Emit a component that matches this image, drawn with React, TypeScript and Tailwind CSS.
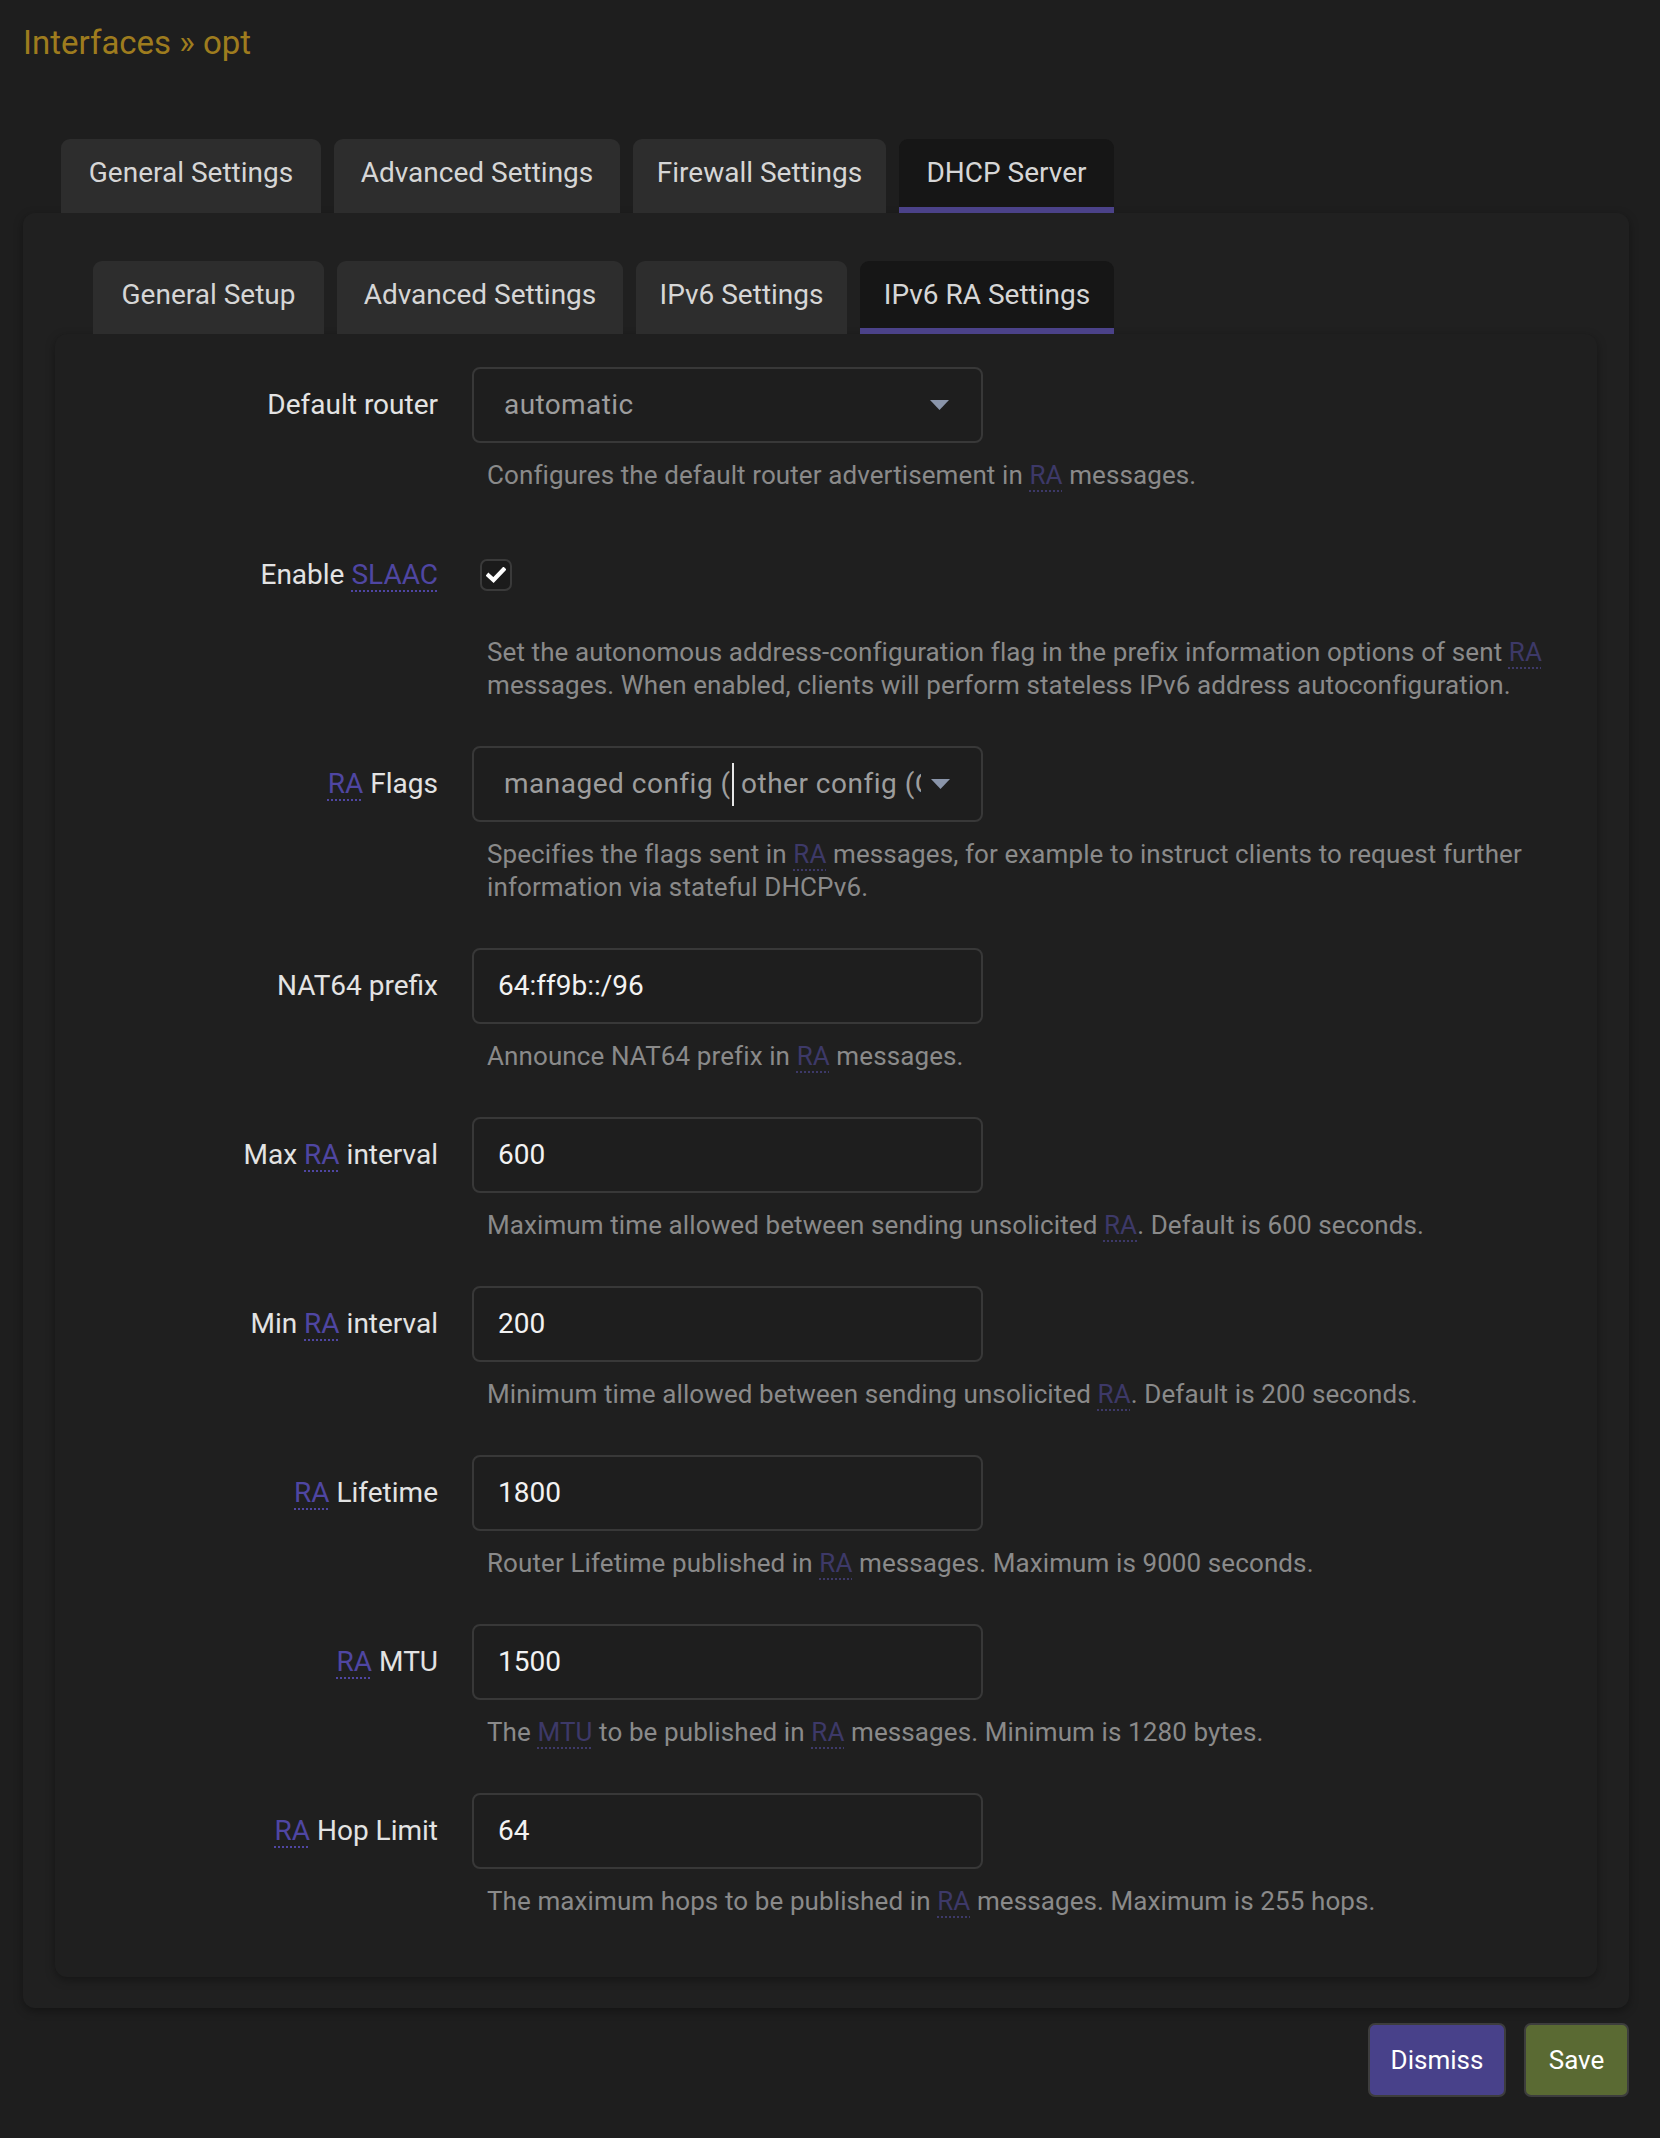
import React from "react";

const Abbr = ({ children, dim }: { children: React.ReactNode; dim?: boolean }) => (
  <abbr
    className={
      dim
        ? "text-[#3d3968] underline decoration-dotted decoration-2 underline-offset-[6px]"
        : "text-[#4f46a2] underline decoration-dotted decoration-2 underline-offset-[6px]"
    }
  >
    {children}
  </abbr>
);

const Arrow = () => (
  <svg width="19" height="10" viewBox="0 0 19 10" className="shrink-0">
    <path d="M0 0 L19 0 L9.5 10 Z" fill="#8a95aa" />
  </svg>
);

type RowProps = {
  label: React.ReactNode;
  control: React.ReactNode;
  help: React.ReactNode;
  tall?: boolean;
};

const Row = ({ label, control, help, tall }: RowProps) => (
  <div className="grid grid-cols-[383px_1fr] gap-x-[34px] pb-[44px]">
    <div
      className={
        tall
          ? "h-[84px] pb-[6px] flex items-center justify-end text-[28px] text-[#e3e3e3] whitespace-nowrap"
          : "h-[76px] flex items-center justify-end text-[28px] text-[#e3e3e3] whitespace-nowrap"
      }
    >
      {label}
    </div>
    <div>
      <div className={tall ? "h-[84px] pb-[6px] flex items-center" : "h-[76px] flex items-center"}>{control}</div>
      <div className="mt-[16px] pl-[15px] text-[26px] leading-[33px] tracking-[0.1px] text-[#8a8a8a] whitespace-nowrap">
        {help}
      </div>
    </div>
  </div>
);

const TextInput = ({ value }: { value: string }) => (
  <div className="w-[511px] h-[76px] border-2 border-[#383838] rounded-[8px] bg-[#1e1e1e] flex items-center pl-[24px] text-[28px] text-[#f2f2f2]">
    {value}
  </div>
);

const Tab = ({ label, active, w }: { label: string; active?: boolean; w: string }) => (
  <div
    className={
      (active
        ? "h-full flex items-center justify-center rounded-t-[9px] bg-[#161616] border-b-[6px] border-[#4b4289] text-[28px] text-[#d6d6d6] whitespace-nowrap "
        : "h-full flex items-center justify-center rounded-t-[9px] bg-[#2d2d2d] border-b-[6px] border-transparent text-[28px] text-[#d6d6d6] whitespace-nowrap ") + w
    }
  >
    {label}
  </div>
);

export default function App() {
  return (
    <div className="min-h-[2138px] bg-[#1e1e1e] font-['Roboto',_'Liberation_Sans',_sans-serif]">
      <div className="pt-[23px] pl-[23px] text-[33px] leading-[40px] text-[#9e7c1e]">Interfaces » opt</div>

      <div className="mt-[76px] ml-[23px] mr-[31px]">
        <div className="h-[74px] flex gap-[13px] pl-[38px]">
          <Tab label="General Settings" w="w-[260px]" />
          <Tab label="Advanced Settings" w="w-[286px]" />
          <Tab label="Firewall Settings" w="w-[253px]" />
          <Tab label="DHCP Server" w="w-[215px]" active />
        </div>

        <div className="rounded-[12px] bg-[#202020] shadow-[0_3px_10px_rgba(0,0,0,0.35)] px-[32px] pt-[48px] pb-[31px]">
          <div className="h-[73px] flex gap-[13px] pl-[38px]">
            <Tab label="General Setup" w="w-[231px]" />
            <Tab label="Advanced Settings" w="w-[286px]" />
            <Tab label="IPv6 Settings" w="w-[211px]" />
            <Tab label="IPv6 RA Settings" w="w-[254px]" active />
          </div>

          <div className="rounded-[12px] bg-[#1f1f1f] shadow-[0_3px_10px_rgba(0,0,0,0.35)] pt-[33px] pb-[15px]">
            <Row
              label="Default router"
              control={
                <div className="w-[511px] h-[76px] border-2 border-[#383838] rounded-[8px] bg-[#1e1e1e] flex items-center justify-between pl-[30px] pr-[32px] text-[28px] tracking-[0.4px] text-[#9d9d9d]">
                  <span>automatic</span>
                  <Arrow />
                </div>
              }
              help={
                <>
                  Configures the default router advertisement in <Abbr dim>RA</Abbr> messages.
                </>
              }
            />
            <Row
              tall
              label={
                <>
                  Enable&nbsp;<Abbr>SLAAC</Abbr>
                </>
              }
              control={
                <div className="ml-[8px] w-[32px] h-[32px] border-2 border-[#3a3a3a] rounded-[7px] bg-[#1b1b1b] flex items-center justify-center">
                  <svg width="20" height="16" viewBox="0 0 20 16">
                    <path d="M2.5 8.5 L7.5 13 L17.5 2.5" stroke="#ffffff" strokeWidth="4.2" fill="none" strokeLinecap="square" />
                  </svg>
                </div>
              }
              help={
                <>
                  Set the autonomous address-configuration flag in the prefix information options of sent <Abbr dim>RA</Abbr>
                  <br />
                  messages. When enabled, clients will perform stateless IPv6 address autoconfiguration.
                </>
              }
            />
            <Row
              label={
                <>
                  <Abbr>RA</Abbr>&nbsp;Flags
                </>
              }
              control={
                <div className="w-[511px] h-[76px] border-2 border-[#383838] rounded-[8px] bg-[#1e1e1e] flex items-center pl-[30px] text-[28px] tracking-[0.5px] text-[#9d9d9d]">
                  <span className="w-[228px] overflow-hidden whitespace-nowrap">managed config (M)</span>
                  <span className="w-[2px] h-[43px] bg-[#e6e6e6] shrink-0" />
                  <span className="ml-[7px] w-[180px] overflow-hidden whitespace-nowrap">other config (O)</span>
                  <span className="ml-[10px]">
                    <Arrow />
                  </span>
                </div>
              }
              help={
                <>
                  Specifies the flags sent in <Abbr dim>RA</Abbr> messages, for example to instruct clients to request further
                  <br />
                  information via stateful DHCPv6.
                </>
              }
            />
            <Row
              label="NAT64 prefix"
              control={<TextInput value="64:ff9b::/96" />}
              help={
                <>
                  Announce NAT64 prefix in <Abbr dim>RA</Abbr> messages.
                </>
              }
            />
            <Row
              label={
                <>
                  Max&nbsp;<Abbr>RA</Abbr>&nbsp;interval
                </>
              }
              control={<TextInput value="600" />}
              help={
                <>
                  Maximum time allowed between sending unsolicited <Abbr dim>RA</Abbr>. Default is 600 seconds.
                </>
              }
            />
            <Row
              label={
                <>
                  Min&nbsp;<Abbr>RA</Abbr>&nbsp;interval
                </>
              }
              control={<TextInput value="200" />}
              help={
                <>
                  Minimum time allowed between sending unsolicited <Abbr dim>RA</Abbr>. Default is 200 seconds.
                </>
              }
            />
            <Row
              label={
                <>
                  <Abbr>RA</Abbr>&nbsp;Lifetime
                </>
              }
              control={<TextInput value="1800" />}
              help={
                <>
                  Router Lifetime published in <Abbr dim>RA</Abbr> messages. Maximum is 9000 seconds.
                </>
              }
            />
            <Row
              label={
                <>
                  <Abbr>RA</Abbr>&nbsp;MTU
                </>
              }
              control={<TextInput value="1500" />}
              help={
                <>
                  The <Abbr dim>MTU</Abbr> to be published in <Abbr dim>RA</Abbr> messages. Minimum is 1280 bytes.
                </>
              }
            />
            <Row
              label={
                <>
                  <Abbr>RA</Abbr>&nbsp;Hop Limit
                </>
              }
              control={<TextInput value="64" />}
              help={
                <>
                  The maximum hops to be published in <Abbr dim>RA</Abbr> messages. Maximum is 255 hops.
                </>
              }
            />
          </div>
        </div>

        <div className="mt-[15px] pb-[41px] flex justify-end gap-[18px]">
          <button className="w-[138px] h-[74px] rounded-[7px] border-2 border-[#3d3d3d] bg-[#48418a] text-[26px] text-white">
            Dismiss
          </button>
          <button className="w-[105px] h-[74px] rounded-[7px] border-2 border-[#3d3d3d] bg-[#5a6a33] text-[26px] text-white">
            Save
          </button>
        </div>
      </div>
    </div>
  );
}
